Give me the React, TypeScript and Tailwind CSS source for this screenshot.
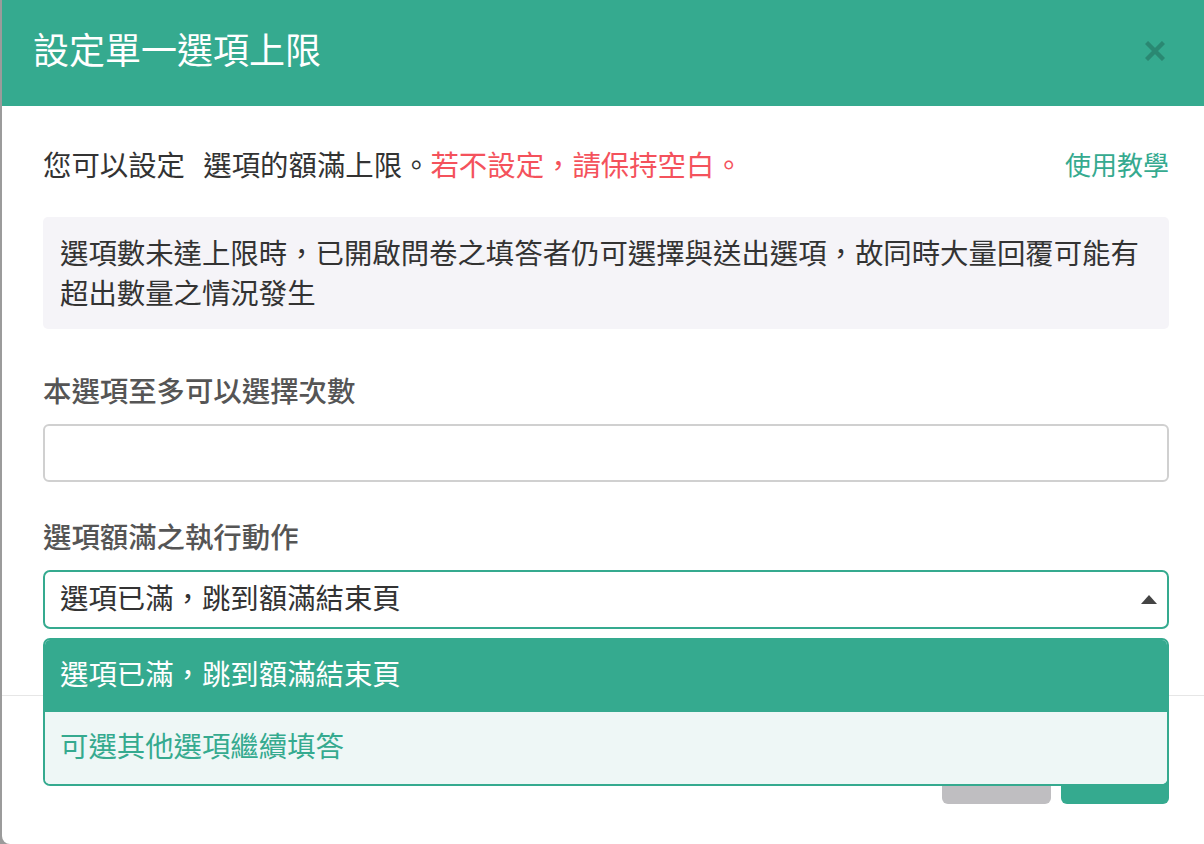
import { useState } from "react";

// 「設定單一選項上限」對話框 — select 展開中的狀態

const OPTIONS = ["選項已滿，跳到額滿結束頁", "可選其他選項繼續填答"];

function CloseIcon() {
  return (
    <svg width="20" height="20" viewBox="0 0 20 20" aria-hidden="true">
      <path d="M1.5 1.5 L18.5 18.5 M18.5 1.5 L1.5 18.5" stroke="currentColor" strokeWidth="4.4" strokeLinecap="butt" />
    </svg>
  );
}

export default function App() {
  const [limit, setLimit] = useState("");
  const [action, setAction] = useState(OPTIONS[0]);
  const [open, setOpen] = useState(true);

  return (
    <div className="w-[1204px] h-[844px] overflow-hidden bg-[#9b9b9b] pl-[2px] font-['Noto_Sans_CJK_TC','Noto_Sans_CJK_SC',sans-serif]">
      <div className="w-[1208px] h-full bg-white rounded-bl-[8px] flex flex-col">
        {/* header */}
        <div className="h-[106px] shrink-0 bg-[#35aa8f] flex items-start justify-between pl-[31px] pr-[41px]">
          <h2 className="pt-[30px] text-[36px] leading-none font-normal text-white">設定單一選項上限</h2>
          <button type="button" className="mt-[41px] mr-[4px] text-black/20" aria-label="關閉">
            <CloseIcon />
          </button>
        </div>

        {/* body */}
        <div className="px-[41px] pt-[38px]">
          <div className="flex items-center justify-between">
            <p className="text-[28.4px] leading-[40px] text-[#333]">
              您可以設定 <span className="inline-block w-[12px]" />選項的額滿上限。
              <span className="text-[#f4525c]">若不設定，請保持空白。</span>
            </p>
            <a className="text-[26px] leading-[40px] text-[#35aa8f]" href="#">
              使用教學
            </a>
          </div>

          <div className="mt-[33px] rounded-[5px] bg-[#f5f4f8] pl-[17px] pr-[24px] pt-[15px] pb-[17px] text-[28.4px] leading-[40px] text-[#333]">
            選項數未達上限時，已開啟問卷之填答者仍可選擇與送出選項，故同時大量回覆可能有超出數量之情況發生
          </div>

          <label className="block mt-[41px] text-[28.4px] leading-[40px] font-medium text-[#555]">
            本選項至多可以選擇次數
          </label>
          <input
            value={limit}
            onChange={(e) => setLimit(e.target.value)}
            className="mt-[14px] block w-full h-[58px] rounded-[6px] border-2 border-[#d0d0d0] px-[16px] text-[28px] outline-none"
          />

          <label className="block mt-[34px] text-[28.4px] leading-[40px] font-medium text-[#555]">
            選項額滿之執行動作
          </label>
          <div className="relative mt-[14px]">
            <button
              type="button"
              onClick={() => setOpen((v) => !v)}
              className="w-full h-[59px] rounded-[7px] border-2 border-[#35aa8f] bg-white pl-[15px] pr-[10px] flex items-center justify-between text-[28.4px] text-[#333]"
            >
              <span className="pb-[5px]">{action}</span>
              <svg width="16" height="9" viewBox="0 0 16 9" aria-hidden="true">
                <path d="M0 9 L8 0 L16 9 Z" fill="#444" />
              </svg>
            </button>
            {open && (
              <ul className="absolute z-10 left-0 right-0 top-[68px] rounded-[7px] border-2 border-[#35aa8f] overflow-hidden bg-white">
                {OPTIONS.map((o) => (
                  <li
                    key={o}
                    onClick={() => {
                      setAction(o);
                      setOpen(false);
                    }}
                    className={`h-[72px] flex items-center pl-[15px] pb-[5px] text-[28.4px] ${
                      o === action ? "bg-[#35aa8f] text-white" : "bg-[#eef7f6] text-[#35aa8f]"
                    }`}
                  >
                    {o}
                  </li>
                ))}
              </ul>
            )}
          </div>
        </div>

        {/* footer */}
        <div className="mt-[66px] border-t border-[#e6e6e6] px-[41px] pt-[50px] flex justify-end gap-[10px]">
          <button type="button" aria-label="取消" className="w-[109px] h-[58px] rounded-[6px] bg-[#bfbec1]" />
          <button type="button" aria-label="確定" className="w-[108px] h-[58px] rounded-[6px] bg-[#35aa8f]" />
        </div>
      </div>
    </div>
  );
}
